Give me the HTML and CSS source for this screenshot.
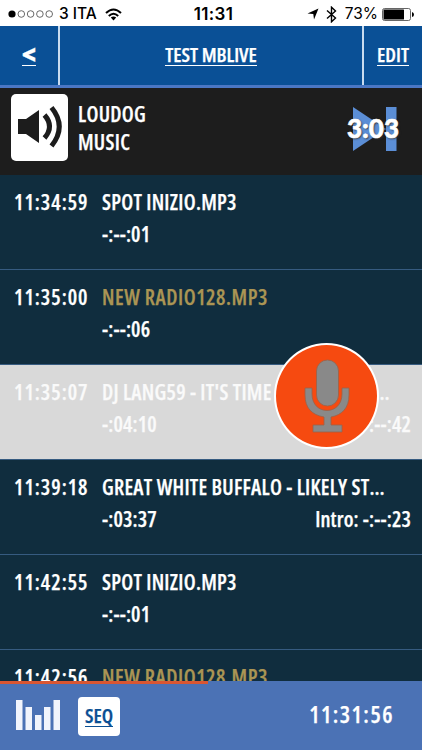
FILE: index.html
```html
<!DOCTYPE html>
<html lang="it">
<head>
    <meta charset="UTF-8">
    <meta name="viewport" content="width=device-width, initial-scale=1.0">
    <title>Test MBLive</title>
    <link rel="stylesheet" href="styles.css">
</head>
<body>
    <div class="status-bar">
        <div class="status-left">
            <svg class="signal" width="46" height="8" viewBox="0 0 46 8">
                <circle cx="4" cy="4" r="3.6" fill="#000"/>
                <g fill="none" stroke="#444" stroke-width="0.8">
                    <circle cx="13.3" cy="4" r="3.3"/>
                    <circle cx="22.6" cy="4" r="3.3"/>
                    <circle cx="31.9" cy="4" r="3.3"/>
                    <circle cx="41.2" cy="4" r="3.3"/>
                </g>
            </svg>
            <span class="carrier">3 ITA</span>
            <svg class="wifi" width="17" height="13" viewBox="0 0 17 13">
                <g fill="none" stroke="#000" stroke-width="2">
                    <path d="M1 5 Q8.500 -2 16 5"/>
                    <path d="M3.800 8 Q8.500 3.600 13.200 8"/>
                </g>
                <path d="M5.800 9.600 Q8.500 7.600 11.200 9.600 L8.500 12.400 Z"/>
            </svg>
        </div>
        <div class="status-time">11:31</div>
        <div class="status-right">
            <svg class="location" width="12" height="12" viewBox="0 0 12 12">
                <path d="M11.500 0.500 L7 11.500 L6.300 6 L0.500 5.500 Z"/>
            </svg>
            <svg class="bluetooth" width="11" height="17" viewBox="0 0 11 17">
                <path d="M1 4.500 L9.500 12 L5.500 15.800 V1.200 L9.500 5 L1 12.500" fill="none" stroke="#000" stroke-width="1.4"/>
            </svg>
            <span class="percent">73%</span>
            <svg class="battery" width="33" height="13" viewBox="0 0 33 13">
                <rect x="0.500" y="0.500" width="28" height="12" rx="2" fill="none" stroke="#555" stroke-width="0.900"/>
                <rect x="1.500" y="1.500" width="20.500" height="10" rx="0.500"/>
                <path d="M30 4 Q32 4.500 32 6.500 Q32 8.500 30 9 Z"/>
            </svg>
        </div>
    </div>

    <div class="header">
        <a class="back"><span>&lt;</span></a>
        <a class="title"><span>TEST MBLIVE</span></a>
        <a class="edit"><span>EDIT</span></a>
    </div>

    <div class="now-playing">
        <div class="speaker">
            <svg width="57" height="66" viewBox="0 0 57 66">
                <path d="M7 25 H15 L28 16 V49 L15 40 H7 Z" fill="#1c1c1c"/>
                <g fill="none" stroke="#1c1c1c" stroke-width="5">
                    <path d="M33.500 21 Q43.500 32.500 33.500 44"/>
                    <path d="M40.500 13.500 Q56 32.500 40.500 52"/>
                </g>
            </svg>
        </div>
        <div class="station">
            <div>LOUDOG</div>
            <div>MUSIC</div>
        </div>
        <div class="next">
            <svg width="44" height="44" viewBox="0 0 44 44">
                <path d="M0 0 L33 22 L0 44 Z M33 0 H43.500 V44 H33 Z" fill="#5b8ed6"/>
            </svg>
            <span class="remaining">3:03</span>
        </div>
    </div>

    <div class="playlist">
        <div class="row">
            <div class="time">11:34:59</div>
            <div class="track">
                <div class="name">SPOT INIZIO.MP3</div>
                <div class="info"><span>-:--:01</span></div>
            </div>
        </div>
        <div class="row radio">
            <div class="time">11:35:00</div>
            <div class="track">
                <div class="name">NEW RADIO128.MP3</div>
                <div class="info"><span>-:--:06</span></div>
            </div>
        </div>
        <div class="row current">
            <div class="time">11:35:07</div>
            <div class="track">
                <div class="name">DJ LANG59 - IT'S TIME TO HOUSE M…</div>
                <div class="info"><span>-:04:10</span><span>Intro: -:--:42</span></div>
            </div>
            <div class="mic">
                <svg width="46" height="74" viewBox="0 0 46 74">
                    <rect x="12.500" y="1" width="22" height="46" rx="11" fill="#898989" stroke="#9b6249" stroke-width="0.800"/>
                    <path d="M1 29 H8 V35 C8 57 38 57 38 35 V29 H45 V36 C45 49 38 56 27 58 V66 H38 V73 H9 V66 H20 V58 C8 56 1 49 1 36 Z" fill="#898989" stroke="#9b6249" stroke-width="0.800"/>
                </svg>
            </div>
        </div>
        <div class="row">
            <div class="time">11:39:18</div>
            <div class="track">
                <div class="name">GREAT WHITE BUFFALO - LIKELY ST…</div>
                <div class="info"><span>-:03:37</span><span>Intro: -:--:23</span></div>
            </div>
        </div>
        <div class="row">
            <div class="time">11:42:55</div>
            <div class="track">
                <div class="name">SPOT INIZIO.MP3</div>
                <div class="info"><span>-:--:01</span></div>
            </div>
        </div>
        <div class="row radio">
            <div class="time">11:42:56</div>
            <div class="track">
                <div class="name">NEW RADIO128.MP3</div>
            </div>
        </div>
    </div>

    <div class="footer">
        <div class="progress"></div>
        <svg class="levels" width="45" height="31" viewBox="0 0 45 31">
            <path d="M0 0 H6.500 V30 H0 Z M9.500 7 H16 V30 H9.500 Z M19 15 H25.500 V30 H19 Z M28 7 H34.500 V30 H28 Z M37.500 0 H44 V30 H37.500 Z" fill="#f1f4fc"/>
        </svg>
        <div class="seq"><span>SEQ</span></div>
        <div class="clock">11:31:56</div>
    </div>
</body>
</html>
```
FILE: styles.css
```css
* {
    box-sizing: border-box;
}

body {
    margin: 0;
    width: 422px;
    height: 750px;
    overflow: hidden;
    display: flex;
    flex-direction: column;
    background: #102d3e;
    color: #fff;
    font-family: 'Open Sans', 'Noto Sans', sans-serif;
    font-stretch: 75%;
    font-weight: 600;
    font-size: 21px;
    line-height: 32px;
    white-space: nowrap;
}

svg {
    display: block;
    flex: none;
}

/* status bar */
.status-bar {
    flex: none;
    height: 26px;
    padding: 2px 7px 0 8px;
    display: grid;
    grid-template-columns: 1fr auto 1fr;
    align-items: center;
    background: #fff;
    color: #000;
    font: 500 16px/24px Inter, sans-serif;
}

.status-left,
.status-right {
    display: flex;
    align-items: center;
}

.status-right {
    justify-content: flex-end;
}

.carrier {
    margin: 0 8px 0 5px;
    font-size: 15.5px;
}

.status-time {
    padding-left: 4px;
    font-weight: 600;
    font-size: 17px;
    letter-spacing: 0.3px;
}

.bluetooth {
    margin: 0 8px 0 7px;
}

.percent {
    margin-right: 4px;
    font-size: 15.5px;
    font-weight: 400;
}

/* header */
.header,
.now-playing,
.playlist,
.footer {
    -webkit-text-stroke: 0.25px;
}

.header {
    flex: none;
    height: 62px;
    display: flex;
    background: #0a5096;
    border-bottom: 3px solid #4b77c4;
    font-size: 20px;
}

.header a {
    display: flex;
    align-items: center;
    justify-content: center;
    padding-bottom: 1px;
}

.header span,
.seq span {
    line-height: 21px;
    border-bottom: 1px solid #fff;
}

.back {
    width: 60px;
    border-right: 2px solid #c9dcf0;
}

.header .back span {
    font-size: 28px;
    font-weight: 800;
}

.title {
    flex: 1;
}

.edit {
    width: 60px;
    border-left: 2px solid #c9dcf0;
}

/* now playing */
.now-playing {
    flex: none;
    height: 87px;
    padding: 6px 25px 0 11px;
    display: flex;
    background: #1d1d1d;
}

.speaker {
    width: 57px;
    height: 67px;
    border-radius: 5px;
    background: #fff;
}

.station {
    margin: 6px 0 0 10px;
    flex: 1;
    line-height: 28px;
    letter-spacing: 0.3px;
}

.next {
    position: relative;
    width: 44px;
    margin: 13px 0 0;
}

.remaining {
    position: absolute;
    left: -6px;
    top: 5px;
    font: 900 26px/32px Lato, sans-serif;
    -webkit-text-stroke: 0.6px #fff;
    text-shadow: 1px 1px 2px #333;
}

/* playlist */
.playlist {
    flex: 1;
    min-height: 0;
    overflow: hidden;
}

.row {
    position: relative;
    height: 95px;
    padding: 11px 11px 0 14px;
    display: flex;
    border-bottom: 1px solid #365b80;
}

.time {
    width: 88px;
    letter-spacing: 1px;
}

.track {
    flex: 1;
}

.name {
    letter-spacing: 0.27px;
}

.info {
    display: flex;
    justify-content: space-between;
    letter-spacing: 0.15px;
}

.radio .name {
    color: #ab9554;
    letter-spacing: 0.55px;
}

.current {
    background: #d9d9d9;
    color: #fafafa;
}

.mic {
    position: absolute;
    z-index: 1;
    left: 274px;
    top: -22px;
    width: 105px;
    height: 106px;
    display: flex;
    align-items: center;
    justify-content: center;
    border: 2.5px solid #fff;
    border-radius: 50%;
    background: #f64a10;
}

/* footer */
.footer {
    position: relative;
    flex: none;
    height: 69px;
    padding: 0 28px 0 16px;
    display: flex;
    align-items: center;
    background: #4b72b5;
}

.progress {
    position: absolute;
    left: 0;
    top: 0;
    width: 208px;
    height: 3px;
    background: #d95632;
}

.seq {
    width: 42px;
    height: 39px;
    margin-left: 17px;
    margin-top: 1px;
    display: flex;
    align-items: center;
    justify-content: center;
    border-radius: 4px;
    background: #fff;
    color: #0a4f93;
    font-size: 20px;
}

.seq span {
    border-color: #0a4f93;
}

.clock {
    margin-left: auto;
    margin-top: -3px;
    font-size: 23px;
    letter-spacing: 1.5px;
}
```
